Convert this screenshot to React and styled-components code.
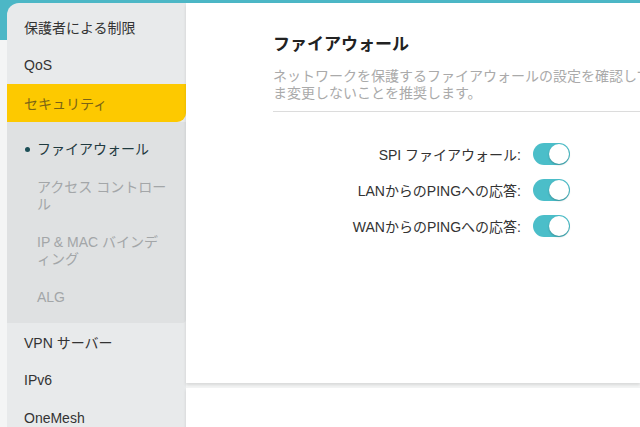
import React from "react";
import styled, { createGlobalStyle } from "styled-components";

const Global = createGlobalStyle`
  html, body { margin: 0; padding: 0; }
  body {
    width: 640px; height: 427px; overflow: hidden;
    font-family: "Liberation Sans", "Noto Sans CJK JP", sans-serif;
    background: #f6f7f7;
  }
`;

const Page = styled.div`
  display: flex;
  align-items: flex-start;
  height: 427px;
  overflow: hidden;
  background: linear-gradient(#4cb7c6 0, #4cb7c6 40px, #f4f5f5 40px);
`;

const Sidebar = styled.nav`
  width: 179px;
  margin: 3px 0 0 7px;
  padding-top: 5px;
  height: 440px;
  background: #e8eaeb;
  border-top-left-radius: 12px;
  flex-shrink: 0;
`;

const NavItem = styled.div`
  height: 38px;
  display: flex;
  align-items: center;
  padding-left: 17px;
  font-size: 14px;
  color: ${(p) => (p.$active ? "#7a6416" : "#333")};
  background: ${(p) => (p.$active ? "#fdc900" : "transparent")};
  border-bottom-right-radius: ${(p) => (p.$active ? "9px" : "0")};
`;

const SubMenu = styled.div`
  background: #dfe1e2;
  padding: 8px 0 7px;
  border-bottom-right-radius: 4px;
`;

const SubItem = styled.div`
  position: relative;
  padding: 10.5px 16px 10.5px 30px;
  font-size: 14px;
  line-height: 17px;
  color: ${(p) => (p.$active ? "#1f3a3f" : "#a3a6a8")};
  line-break: normal;
  &::before {
    content: "";
    display: ${(p) => (p.$active ? "block" : "none")};
    position: absolute;
    left: 18px;
    top: 17px;
    width: 5px;
    height: 5px;
    border-radius: 50%;
    background: #1d4f57;
  }
`;

const Main = styled.main`
  flex: 1;
  margin-top: 3px;
  display: flex;
  flex-direction: column;
  gap: 5px;
  min-width: 0;
`;

const Card = styled.section`
  background: #ffffff;
  height: ${(p) => p.$h}px;
  padding: 31px 0 0 87px;
  box-sizing: border-box;
  box-shadow: 0 2px 3px rgba(0, 0, 0, 0.12);
  overflow: hidden;
`;

const Title = styled.h2`
  margin: 0;
  font-size: 17px;
  line-height: 22px;
  font-weight: bold;
  color: #222;
`;

const Desc = styled.div`
  margin-top: 12px;
  padding-bottom: 9px;
  border-bottom: 1px solid #dcdcdc;
  font-size: 14px;
  line-height: 17px;
  color: #aaaaaa;
  white-space: nowrap;
`;

const Line = styled.div``;

const Settings = styled.div`
  margin-top: 31px;
  display: grid;
  grid-template-columns: 248px auto;
  column-gap: 12px;
  row-gap: 14px;
  align-items: center;
  justify-content: start;
`;

const Label = styled.div`
  text-align: right;
  font-size: 14px;
  color: #333;
`;

const Toggle = styled.div`
  position: relative;
  width: 37px;
  height: 22px;
  border-radius: 11px;
  background: #4bbec9;
  &::after {
    content: "";
    position: absolute;
    right: 1px;
    top: 1px;
    width: 20px;
    height: 20px;
    border-radius: 50%;
    background: #fff;
    box-shadow: 0 1px 2px rgba(0, 0, 0, 0.25);
  }
`;

const settings = [
  "SPI ファイアウォール:",
  "LANからのPINGへの応答:",
  "WANからのPINGへの応答:",
];

export default function App() {
  return (
    <>
      <Global />
      <Page>
        <Sidebar>
          <NavItem>保護者による制限</NavItem>
          <NavItem>QoS</NavItem>
          <NavItem $active>セキュリティ</NavItem>
          <SubMenu>
            <SubItem $active>ファイアウォール</SubItem>
            <SubItem>アクセス コントロール</SubItem>
            <SubItem>IP &amp; MAC バインディング</SubItem>
            <SubItem>ALG</SubItem>
          </SubMenu>
          <NavItem>VPN サーバー</NavItem>
          <NavItem>IPv6</NavItem>
          <NavItem>OneMesh</NavItem>
        </Sidebar>
        <Main>
          <Card $h={380}>
            <Title>ファイアウォール</Title>
            <Desc>
              <Line>ネットワークを保護するファイアウォールの設定を確認してください。これらの設定はデフォルトのま</Line>
              <Line>ま変更しないことを推奨します。</Line>
            </Desc>
            <Settings>
              {settings.map((s) => (
                <React.Fragment key={s}>
                  <Label>{s}</Label>
                  <Toggle />
                </React.Fragment>
              ))}
            </Settings>
          </Card>
          <Card $h={100} />
        </Main>
      </Page>
    </>
  );
}
